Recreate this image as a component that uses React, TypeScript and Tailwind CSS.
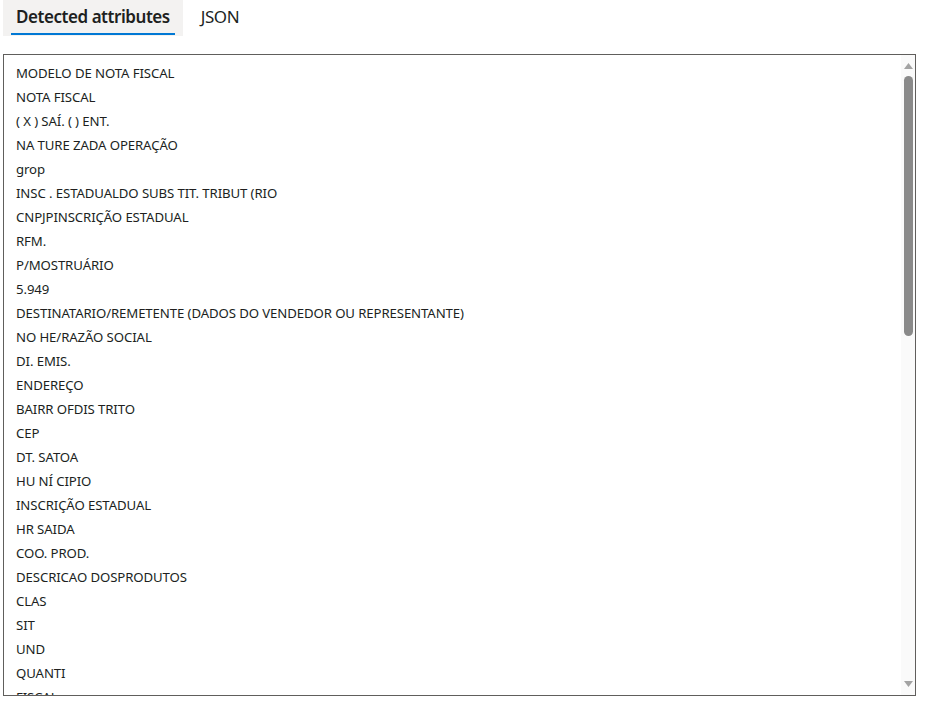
import React, { useState } from "react";

const attributes = [
  "MODELO DE NOTA FISCAL",
  "NOTA FISCAL",
  "( X ) SAÍ. ( ) ENT.",
  "NA TURE ZADA OPERAÇÃO",
  "grop",
  "INSC . ESTADUALDO SUBS TIT. TRIBUT (RIO",
  "CNPJPINSCRIÇÃO ESTADUAL",
  "RFM.",
  "P/MOSTRUÁRIO",
  "5.949",
  "DESTINATARIO/REMETENTE (DADOS DO VENDEDOR OU REPRESENTANTE)",
  "NO HE/RAZÃO SOCIAL",
  "DI. EMIS.",
  "ENDEREÇO",
  "BAIRR OFDIS TRITO",
  "CEP",
  "DT. SATOA",
  "HU NÍ CIPIO",
  "INSCRIÇÃO ESTADUAL",
  "HR SAIDA",
  "COO. PROD.",
  "DESCRICAO DOSPRODUTOS",
  "CLAS",
  "SIT",
  "UND",
  "QUANTI",
  "FISCAL",
  "VALOR UNIT.",
  "VALOR TOTAL",
];

const tabs = ["Detected attributes", "JSON"];

export default function App() {
  const [active, setActive] = useState(0);

  return (
    <div className="w-[946px] h-[705px] bg-white text-[#201f1e] font-['Noto_Sans',sans-serif] overflow-hidden">
      <div className="flex gap-[5px] pl-[3px]">
        {tabs.map((tab, index) => (
          <button
            key={tab}
            onClick={() => setActive(index)}
            className={`h-[36px] px-[8px] flex flex-col ${
              active === index ? "bg-[#f3f2f1]" : "bg-white"
            }`}
          >
            <span
              className={`flex-1 flex items-center px-[5px] text-[17px] tracking-[-0.45px] leading-none ${
                active === index ? "font-semibold" : "font-normal"
              }`}
            >
              {tab}
            </span>
            <span
              className={`h-[2px] w-full mb-[1px] ${
                active === index ? "bg-[#0078d4]" : "bg-transparent"
              }`}
            />
          </button>
        ))}
      </div>

      <div className="mt-[18px] ml-[3px] w-[913px] h-[642px] border border-[#605e5c] flex">
        <div className="flex-1 overflow-hidden pt-[6px] pl-[12px]">
          {attributes.map((item, index) => (
            <div
              key={index}
              className="h-[24px] leading-[24px] text-[13.2px] tracking-[-0.1px] whitespace-nowrap"
            >
              {item}
            </div>
          ))}
        </div>
        <div className="w-[14px] bg-[#fafafa] flex flex-col items-center">
          <div className="h-[21px] flex items-center justify-center">
            <svg width="9" height="6" viewBox="0 0 9 6">
              <path d="M4.5 0 L9 6 L0 6 Z" fill="#a3a3a3" />
            </svg>
          </div>
          <div className="w-[9px] h-[260px] rounded-full bg-[#8a8a8a]" />
          <div className="flex-1" />
          <div className="h-[22px] flex items-center justify-center">
            <svg width="9" height="6" viewBox="0 0 9 6">
              <path d="M0 0 L9 0 L4.5 6 Z" fill="#a3a3a3" />
            </svg>
          </div>
        </div>
      </div>
    </div>
  );
}
